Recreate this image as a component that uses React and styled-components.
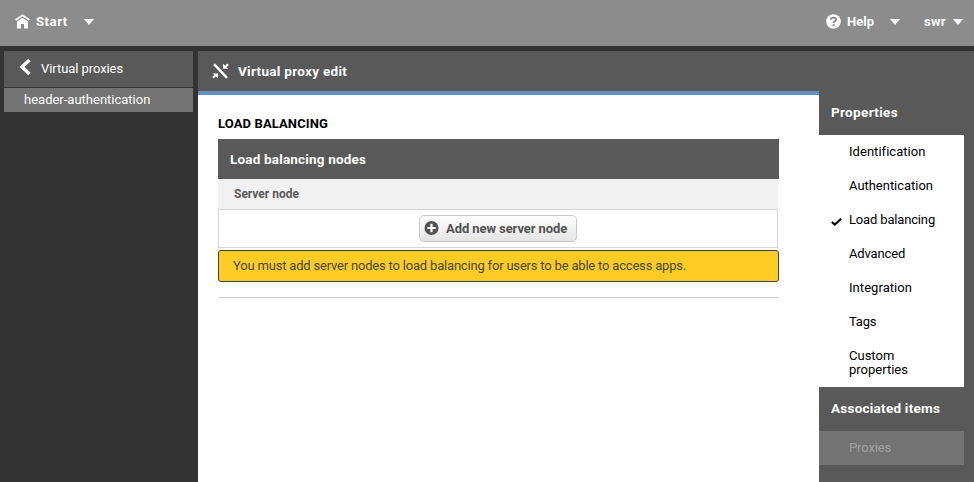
import React from "react";
import styled, { createGlobalStyle } from "styled-components";

const GlobalStyle = createGlobalStyle`
  * { box-sizing: border-box; }
  body {
    margin: 0;
    background: #333;
    font: 13px/14px Roboto, "Liberation Sans", sans-serif;
    color: #000;
  }
  svg { display: block; flex: none; }
`;

const Page = styled.div`
  width: 974px;
  height: 482px;
  overflow: hidden;
  display: flex;
  flex-direction: column;
`;

const TopBar = styled.header`
  height: 46px;
  flex: none;
  display: flex;
  align-items: flex-start;
  padding: 13px 11px 0 15px;
  background: #8c8c8c;
  color: #fff;
`;

const TopItem = styled.div`
  display: flex;
  align-items: center;
  height: 17px;
  margin-left: ${(p) => p.$push || "0"};
`;

const Label = styled.span`
  font-weight: ${(p) => (p.$bold ? 700 : 400)};
  font-size: ${(p) => p.$size || 13}px;
  letter-spacing: ${(p) => p.$track || 0}px;
  white-space: nowrap;
`;

const TopLabel = styled(Label)`
  width: ${(p) => p.$w}px;
  margin-left: ${(p) => p.$gap || 0}px;
`;

const Body = styled.div`
  flex: 1;
  display: flex;
  padding-top: 5px;
  min-height: 0;
`;

const SideNav = styled.nav`
  width: 189px;
  margin: 0 5px 0 4px;
  display: flex;
  flex-direction: column;
  gap: 1px;
  color: #fff;
`;

const BackRow = styled.div`
  height: 36px;
  display: flex;
  align-items: center;
  padding: 0 0 1px 15px;
  gap: 10px;
  background: #595959;

  svg { margin-top: -4px; }
`;

const NavRow = styled.div`
  height: 24px;
  padding: 5px 0 0 20px;
  background: #737373;
`;

const Workspace = styled.section`
  flex: 1;
  display: flex;
  background: #595959;
`;

const Editor = styled.main`
  width: 621px;
  display: flex;
  flex-direction: column;
`;

const EditorHeader = styled.div`
  height: 44px;
  flex: none;
  display: flex;
  gap: 9px;
  padding: 13px 0 0 14px;
  border-bottom: 4px solid #6190c1;
  background: #595959;
  color: #fff;

  svg { margin-top: -1px; }
`;

const EditorContent = styled.div`
  flex: 1;
  padding: 22px 40px 0 20px;
  background: #fff;
`;

const SectionTitle = styled.h2`
  height: 22px;
  margin: 0;
  font-size: 13px;
  line-height: 14px;
  letter-spacing: 0.12px;
`;

const TableTitle = styled.div`
  height: 40px;
  padding: 13px 12px;
  background: #595959;
  color: #fff;
`;

const TableHead = styled.div`
  height: 30px;
  margin-right: 1px;
  padding: 8px 16px;
  background: #f1f1f1;
  color: #595959;
`;

const TableBody = styled.div`
  height: 39px;
  margin-right: 1px;
  padding-top: 5px;
  display: flex;
  justify-content: center;
  border: 1px solid #d6d6d6;
`;

const AddButton = styled.button`
  width: 158px;
  height: 27px;
  margin: 0;
  padding: 0 0 0 4px;
  display: flex;
  align-items: center;
  gap: 7px;
  border: 1px solid #c8c8c8;
  border-radius: 5px;
  background: linear-gradient(#fff, #e4e4e4);
  color: #525252;
  font: inherit;
`;

const Warning = styled.div`
  height: 32px;
  margin-top: 2px;
  padding: 8px 14px;
  border: 1px solid #404040;
  border-radius: 3px;
  background: #ffcc26;
  color: #4a4632;
`;

const Divider = styled.hr`
  height: 1px;
  margin: 15px 0 0;
  border: 0;
  background: #ccc;
`;

const Sidebar = styled.aside`
  width: 145px;
  padding-top: 40px;
`;

const SidebarTitle = styled.div`
  height: 44px;
  padding: 14px 12px 0;
  color: #fff;
`;

const PropertyList = styled.div`
  height: 252px;
  background: #fff;
`;

const Property = styled.div`
  min-height: 34px;
  padding: 10px 50px 10px 12px;
  display: grid;
  grid-template-columns: 18px 1fr;

  svg { margin: 4px 0 -4px; }
`;

const PropertyLabel = styled(Label)`
  grid-column: 2;
  grid-row: 1;
  white-space: ${(p) => (p.$wrap ? "normal" : "nowrap")};
`;

const AssociatedItem = styled.div`
  height: 34px;
  padding: 10px 30px;
  background: #737373;
  color: #a0a0a0;
`;

const HomeIcon = () => (
  <svg width="15" height="15" viewBox="0 0 15 15">
    <path d="M.6 6 7.5 1.2 14.4 6" fill="none" stroke="#fff" strokeWidth="1.7" />
    <path d="M2 7.4 7.5 3.7 13 7.4v7.1H9V10H6v4.5H2Z" fill="#fff" />
  </svg>
);

const Caret = () => (
  <svg width="10" height="6" viewBox="0 0 10 6">
    <path d="M0 0h10L5 6Z" fill="#fff" />
  </svg>
);

const HelpIcon = () => (
  <svg width="15" height="15" viewBox="0 0 15 15">
    <circle cx="7.5" cy="7.5" r="7.3" fill="#fff" />
    <path d="M5 5.7C5 3 10 2.9 10 5.6 10 7.3 7.6 7.2 7.6 9" fill="none" stroke="#858585" strokeWidth="1.9" />
    <path d="M6.6 10.2h2v2h-2Z" fill="#858585" />
  </svg>
);

const BackIcon = () => (
  <svg width="12" height="16" viewBox="0 0 12 16">
    <path d="M10.5 1 3 8l7.5 7" fill="none" stroke="#fff" strokeWidth="3.4" />
  </svg>
);

const ProxyIcon = () => (
  <svg width="17" height="16" viewBox="0 0 17 16">
    <path d="M2 1.2 15 14.8" stroke="#fff" strokeWidth="2.4" />
    <path d="M11 .8v5h5.2L14.6 4.2 16.8 2 15.3.6l-2.2 2.1ZM6 15.6v-5.2H.8l1.6 1.6L.2 14.1l1.4 1.4 2.2-2.1Z" fill="#fff" />
  </svg>
);

const PlusIcon = () => (
  <svg width="15" height="15" viewBox="0 0 15 15">
    <circle cx="7.5" cy="7" r="7" fill="#525252" />
    <path d="M7.5 2.8v8.4M3.3 7h8.4" stroke="#fff" strokeWidth="2.2" />
  </svg>
);

const CheckIcon = () => (
  <svg width="12" height="10" viewBox="0 0 12 10">
    <path d="M.8 5 3.8 7.6 10.2 1.8" fill="none" stroke="#000" strokeWidth="2" />
  </svg>
);

const properties = [
  { name: "Identification", track: 0.04 },
  { name: "Authentication", track: -0.03 },
  { name: "Load balancing", track: -0.16, selected: true },
  { name: "Advanced", track: -0.14 },
  { name: "Integration", track: 0.06 },
  { name: "Tags", track: -0.2 },
  { name: "Custom properties", wrap: true },
];

export default function App() {
  return (
    <>
      <GlobalStyle />
      <Page>
        <TopBar>
          <TopItem>
            <HomeIcon />
            <TopLabel $bold $track={0.6} $w={48} $gap={6}>Start</TopLabel>
            <Caret />
          </TopItem>
          <TopItem $push="auto">
            <HelpIcon />
            <TopLabel $bold $w={43} $gap={6}>Help</TopLabel>
            <Caret />
          </TopItem>
          <TopItem $push="24px">
            <TopLabel $bold $track={0.3} $w={29}>swr</TopLabel>
            <Caret />
          </TopItem>
        </TopBar>
        <Body>
          <SideNav>
            <BackRow>
              <BackIcon />
              <Label $track={-0.07}>Virtual proxies</Label>
            </BackRow>
            <NavRow>
              <Label>header-authentication</Label>
            </NavRow>
          </SideNav>
          <Workspace>
            <Editor>
              <EditorHeader>
                <ProxyIcon />
                <Label $bold $size={13.5} $track={0.3}>Virtual proxy edit</Label>
              </EditorHeader>
              <EditorContent>
                <SectionTitle>LOAD BALANCING</SectionTitle>
                <TableTitle>
                  <Label $bold $size={13.5} $track={0.18}>Load balancing nodes</Label>
                </TableTitle>
                <TableHead>
                  <Label $bold $size={12}>Server node</Label>
                </TableHead>
                <TableBody>
                  <AddButton>
                    <PlusIcon />
                    <Label $bold $track={-0.08}>Add new server node</Label>
                  </AddButton>
                </TableBody>
                <Warning>
                  <Label $track={-0.19}>
                    You must add server nodes to load balancing for users to be able to access apps.
                  </Label>
                </Warning>
                <Divider />
              </EditorContent>
            </Editor>
            <Sidebar>
              <SidebarTitle>
                <Label $bold $size={13.5} $track={0.34}>Properties</Label>
              </SidebarTitle>
              <PropertyList>
                {properties.map((p) => (
                  <Property key={p.name}>
                    {p.selected && <CheckIcon />}
                    <PropertyLabel $track={p.track} $wrap={p.wrap}>{p.name}</PropertyLabel>
                  </Property>
                ))}
              </PropertyList>
              <SidebarTitle>
                <Label $bold $size={13.5} $track={0.24}>Associated items</Label>
              </SidebarTitle>
              <AssociatedItem>
                <Label $track={-0.12}>Proxies</Label>
              </AssociatedItem>
            </Sidebar>
          </Workspace>
        </Body>
      </Page>
    </>
  );
}
